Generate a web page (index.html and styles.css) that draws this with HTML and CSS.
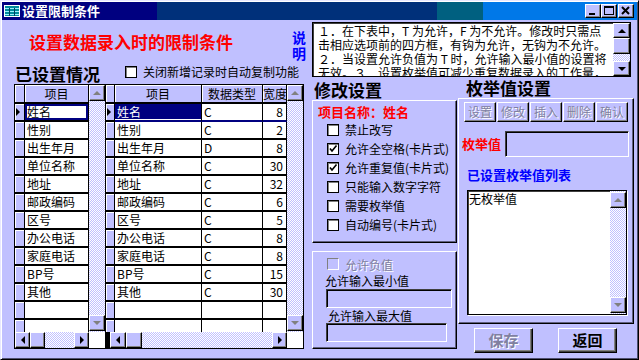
FILE: index.html
```html
<!DOCTYPE html>
<html lang="zh">
<head>
<meta charset="utf-8">
<title>设置限制条件</title>
<link rel="stylesheet" href="styles.css">
</head>
<body>
<div class="window">
  <div class="titlebar">
    <svg class="appicon" width="16" height="12" viewBox="0 0 16 12"><rect x="0.5" y="0.5" width="15" height="11" fill="#008C9C" stroke="#fff"/><path d="M1 3.5H15M1 6.5H15M1 9.5H15" stroke="#9CF0FF"/><path d="M5.5 3V11M10.5 3V11" stroke="#004060"/></svg>
    <span class="title">设置限制条件</span>
    <div class="ctrls">
      <span class="cbtn"><svg width="14" height="12" viewBox="0 0 14 12"><rect x="3" y="8" width="6" height="2" fill="#000"/></svg></span>
      <span class="cbtn"><svg width="14" height="12" viewBox="0 0 14 12"><rect x="2.5" y="1.5" width="9" height="8" fill="none" stroke="#000"/><rect x="2" y="1" width="10" height="2" fill="#000"/></svg></span>
      <span class="cbtn close"><svg width="14" height="12" viewBox="0 0 14 12"><path d="M3 2L10 9M10 2L3 9" stroke="#000" stroke-width="2"/></svg></span>
    </div>
  </div>
  <div class="body">
    <div class="leftcol">
      <div class="headrow">
        <h1 class="main-title">设置数据录入时的限制条件</h1>
        <div class="explain"><span>说</span><span>明</span></div>
      </div>
      <div class="setrow">
        <span class="section sec-left">已设置情况</span>
        <span class="cb"></span>
        <span class="cblabel">关闭新增记录时自动复制功能</span>
      </div>
      <div class="grids">
        <div class="dgrid g1">
          <div class="tbl">
            <div class="tr h"><div class="td th sel"></div><div class="td th c1a">项目</div></div>
            <div class="tr"><div class="td sel"><i class="ptr"></i></div><div class="td c1a focus">姓名</div></div>
            <div class="tr"><div class="td sel"></div><div class="td c1a">性别</div></div>
            <div class="tr"><div class="td sel"></div><div class="td c1a">出生年月</div></div>
            <div class="tr"><div class="td sel"></div><div class="td c1a">单位名称</div></div>
            <div class="tr"><div class="td sel"></div><div class="td c1a">地址</div></div>
            <div class="tr"><div class="td sel"></div><div class="td c1a">邮政编码</div></div>
            <div class="tr"><div class="td sel"></div><div class="td c1a">区号</div></div>
            <div class="tr"><div class="td sel"></div><div class="td c1a">办公电话</div></div>
            <div class="tr"><div class="td sel"></div><div class="td c1a">家庭电话</div></div>
            <div class="tr"><div class="td sel"></div><div class="td c1a">BP号</div></div>
            <div class="tr"><div class="td sel"></div><div class="td c1a">其他</div></div>
            <div class="tr"><div class="td sel"></div><div class="td c1a"></div></div>
            <div class="tr"><div class="td sel"></div><div class="td c1a"></div></div>
          </div>
          <div class="vsb">
            <span class="sbtn gv"><i class="ar up dis"></i></span>
            <span class="sbtn gv"><i class="ar down dis"></i></span>
          </div>
          <div class="hsb">
            <span class="sbtn hb"><i class="ar left"></i></span>
            <span class="sbtn hb"></span>
            <span class="track"></span>
            <span class="sbtn hb"><i class="ar right"></i></span>
          </div>
          <div class="corner"></div>
        </div>
        <div class="dgrid g2">
          <div class="tbl">
            <div class="tr h"><div class="td th sel2"></div><div class="td th c2a">项目</div><div class="td th c2b">数据类型</div><div class="td th c2c">宽度</div></div>
            <div class="tr cur"><div class="td sel2"><i class="ptr"></i></div><div class="td c2a hl">姓名</div><div class="td c2b">C</div><div class="td c2c">8</div></div>
            <div class="tr"><div class="td sel2"></div><div class="td c2a">性别</div><div class="td c2b">C</div><div class="td c2c">2</div></div>
            <div class="tr"><div class="td sel2"></div><div class="td c2a">出生年月</div><div class="td c2b">D</div><div class="td c2c">8</div></div>
            <div class="tr"><div class="td sel2"></div><div class="td c2a">单位名称</div><div class="td c2b">C</div><div class="td c2c">30</div></div>
            <div class="tr"><div class="td sel2"></div><div class="td c2a">地址</div><div class="td c2b">C</div><div class="td c2c">32</div></div>
            <div class="tr"><div class="td sel2"></div><div class="td c2a">邮政编码</div><div class="td c2b">C</div><div class="td c2c">6</div></div>
            <div class="tr"><div class="td sel2"></div><div class="td c2a">区号</div><div class="td c2b">C</div><div class="td c2c">5</div></div>
            <div class="tr"><div class="td sel2"></div><div class="td c2a">办公电话</div><div class="td c2b">C</div><div class="td c2c">8</div></div>
            <div class="tr"><div class="td sel2"></div><div class="td c2a">家庭电话</div><div class="td c2b">C</div><div class="td c2c">8</div></div>
            <div class="tr"><div class="td sel2"></div><div class="td c2a">BP号</div><div class="td c2b">C</div><div class="td c2c">15</div></div>
            <div class="tr"><div class="td sel2"></div><div class="td c2a">其他</div><div class="td c2b">C</div><div class="td c2c">30</div></div>
            <div class="tr"><div class="td sel2"></div><div class="td c2a"></div><div class="td c2b"></div><div class="td c2c"></div></div>
            <div class="tr"><div class="td sel2"></div><div class="td c2a"></div><div class="td c2b"></div><div class="td c2c"></div></div>
          </div>
          <div class="vsb">
            <span class="sbtn gv"><i class="ar up dis"></i></span>
            <span class="sbtn gv"><i class="ar down dis"></i></span>
          </div>
          <div class="hsb">
            <span class="spacer"></span>
            <span class="sbtn hb2"><i class="ar left"></i></span>
            <span class="sbtn hb2"></span>
            <span class="track"></span>
            <span class="sbtn hb"><i class="ar right"></i></span>
          </div>
          <div class="corner"></div>
        </div>
      </div>
    </div>
    <div class="rightcol">
      <div class="memo">
        <div class="memo-text">
          <div>１．在下表中，T 为允许，F 为不允许。修改时只需点</div>
          <div>击相应选项前的四方框，有钩为允许，无钩为不允许。</div>
          <div>２．当设置允许负值为 T 时，允许输入最小值的设置将</div>
          <div>无效。３．设置枚举值可减少重复数据录入的工作量，</div>
        </div>
        <div class="memo-sb">
          <span class="sbtn mb"><i class="ar up"></i></span>
          <span class="sbtn mthumb"></span>
          <span class="track"></span>
          <span class="sbtn mb"><i class="ar down"></i></span>
        </div>
      </div>
      <div class="panels">
        <div class="midcol">
          <div class="section sec-mid">修改设置</div>
          <div class="gbox box1">
            <div class="itemname">项目名称：姓名</div>
            <div class="cbrow"><span class="cb"></span><span class="cblabel">禁止改写</span></div>
            <div class="cbrow"><span class="cb"><svg width="10" height="10" viewBox="0 0 10 10"><path d="M2 4.5L4 7L8.5 1.5" fill="none" stroke="#000" stroke-width="1.6"/></svg></span><span class="cblabel">允许全空格(卡片式)</span></div>
            <div class="cbrow"><span class="cb"><svg width="10" height="10" viewBox="0 0 10 10"><path d="M2 4.5L4 7L8.5 1.5" fill="none" stroke="#000" stroke-width="1.6"/></svg></span><span class="cblabel">允许重复值(卡片式)</span></div>
            <div class="cbrow"><span class="cb"></span><span class="cblabel">只能输入数字字符</span></div>
            <div class="cbrow"><span class="cb"></span><span class="cblabel">需要枚举值</span></div>
            <div class="cbrow"><span class="cb"></span><span class="cblabel">自动编号(卡片式)</span></div>
          </div>
          <div class="gbox box2">
            <div class="cbrow negrow"><span class="cb dis"></span><span class="cblabel distext">允许负值</span></div>
            <div class="flabel l1">允许输入最小值</div>
            <div class="field f1"></div>
            <div class="flabel l2">允许输入最大值</div>
            <div class="field f2"></div>
          </div>
        </div>
        <div class="enumcol">
          <div class="section sec-enum">枚举值设置</div>
          <div class="gbox box3">
            <div class="ebtns">
              <span class="ebtn distext">设置</span>
              <span class="ebtn distext">修改</span>
              <span class="ebtn distext">插入</span>
              <span class="ebtn distext">删除</span>
              <span class="ebtn distext">确认</span>
            </div>
            <div class="enumrow">
              <span class="enumlabel">枚举值</span>
              <span class="field f3"></span>
            </div>
            <div class="listtitle">已设置枚举值列表</div>
            <div class="listbox">
              <div class="list-text">无枚举值</div>
              <div class="vsb lsb">
                <span class="sbtn gv"><i class="ar up dis"></i></span>
                <span class="sbtn gv"><i class="ar down dis"></i></span>
              </div>
            </div>
          </div>
          <div class="bottombtns">
            <span class="bbtn distext">保存</span>
            <span class="bbtn go">返回</span>
          </div>
        </div>
      </div>
    </div>
  </div>
</div>
</body>
</html>
```

FILE: styles.css
```css
* { box-sizing: border-box; margin: 0; padding: 0; }
html, body { width: 639px; height: 360px; overflow: hidden; }
body {
  background: #C0C0FF;
  font-family: "Noto Sans CJK SC", "Noto Sans", sans-serif;
  font-size: 12px;
  color: #000;
}
.window {
  width: 639px;
  height: 360px;
  background: #C0C0FF;
  border: 1px solid;
  border-color: #E8E8FF #000 #000 #E8E8FF;
  box-shadow: inset 1px 1px #fff, inset -1px -1px #505070;
  display: flex;
  flex-direction: column;
}
/* title bar */
.titlebar {
  margin: 1px 1px 0 1px;
  height: 18px;
  display: flex;
  align-items: center;
  padding-left: 2px;
  background: linear-gradient(to right, #000080 0 155px, #00307A 155px 435px, #006080 435px 481px, #0078E8 481px);
  flex: none;
}
.appicon { display: block; flex: none; }
.title {
  color: #fff;
  font-weight: bold;
  font-size: 13px;
  line-height: 16px;
  margin-left: 2px;
}
.ctrls { margin-left: auto; display: flex; margin-right: 3px; }
.cbtn {
  width: 16px;
  height: 14px;
  background: #C0C0FF;
  border: 1px solid;
  border-color: #fff #000 #000 #fff;
  box-shadow: inset -1px -1px #808080;
  display: flex;
  align-items: center;
  justify-content: center;
}
.cbtn.close { margin-left: 1px; }
.cbtn svg { display: block; }

/* body */
.body {
  flex: 1;
  display: flex;
  padding-left: 13px;
}
.leftcol { width: 292px; display: flex; flex-direction: column; flex: none; }
.headrow { height: 44px; display: flex; align-items: flex-start; }
.main-title {
  color: #FF0000;
  font-size: 17px;
  font-weight: bold;
  line-height: 20px;
  margin: 12px 0 0 15px;
  white-space: nowrap;
}
.explain {
  margin-left: auto;
  width: 14px;
  margin-top: 9px;
  color: #0000FF;
  font-size: 14px;
  font-weight: bold;
  line-height: 16px;
  display: flex;
  flex-direction: column;
}
.setrow { height: 20px; display: flex; align-items: flex-start; }
.section { font-size: 17px; font-weight: bold; line-height: 20px; white-space: nowrap; }
.sec-left { width: 111px; padding-left: 1px; }
.setrow .cb { margin-top: 2px; }
.setrow .cblabel { margin-left: 6px; line-height: 16px; }

.cb {
  width: 12px;
  height: 12px;
  flex: none;
  background: #fff;
  border: 1px solid #000;
  box-shadow: inset 1px 1px #808080;
  display: flex;
  align-items: center;
  justify-content: center;
}
.cb svg { display: block; }
.cb.dis { background: #C0C0FF; border-color: #808080 #fff #fff #808080; box-shadow: none; }
.cblabel { font-size: 12px; white-space: nowrap; }
.distext { color: #8080A0; text-shadow: 1px 1px #fff; }

/* grids */
.grids { display: flex; height: 265px; }
.dgrid {
  display: grid;
  border: 1px solid #000;
  background: #fff;
  height: 265px;
}
.g1 { width: 91px; border-right: none; grid-template-columns: 74px 16px; grid-template-rows: 247px 16px; }
.g2 { width: 199px; grid-template-columns: 181px 16px; grid-template-rows: 247px 16px; }
.tbl { overflow: hidden; background: #fff; }
.tr { display: flex; height: 18px; }
.tr.h { height: 19px; }
.td {
  flex: none;
  border-right: 1px solid #000;
  border-bottom: 2px solid #000;
  padding-left: 2px;
  line-height: 16px;
  white-space: nowrap;
  overflow: hidden;
  font-size: 12px;
}
.th { background: #C0C0FF; text-align: center; padding-left: 0; line-height: 17px; box-shadow: inset 1px 1px #fff; }
.sel, .sel2 { background: #C0C0FF; box-shadow: inset 1px 1px #fff; padding-left: 1px; display: flex; align-items: center; }
.sel { width: 10px; }
.sel2 { width: 9px; }
.c1a { width: 64px; }
.c2a { width: 87px; }
.c2b { width: 61px; }
.c2c { width: 24px; text-align: right; padding-left: 0; padding-right: 3px; }
.th.c2c { text-align: center; padding-right: 0; }
.ptr { display: block; width: 0; height: 0; border-top: 4px solid transparent; border-bottom: 4px solid transparent; border-left: 4px solid #000; }
.focus { box-shadow: inset 0 0 0 1px #000080, inset 0 0 0 2px #000080; }
.cur .td { border-bottom-color: #000080; }
.cur .sel2 { border-bottom-color: #000; }
.hl { background: #000080; color: #fff; box-shadow: inset 0 -1px #fff; }

.vsb {
  display: flex;
  flex-direction: column;
  justify-content: space-between;
  background-color: #fff;
  background-image: repeating-conic-gradient(#C0C0FF 0 25%, #fff 0 50%);
  background-size: 2px 2px;
}
.sbtn {
  background: #C0C0FF;
  border: 1px solid;
  border-color: #fff #000 #000 #fff;
  box-shadow: inset -1px -1px #808080;
  display: flex;
  align-items: center;
  justify-content: center;
  flex: none;
}
.gv { height: 16px; }
.g1 .vsb .gv:last-child, .g2 .vsb .gv:last-child { margin-bottom: 1px; }
.hsb { display: flex; background-color: #fff; background-image: repeating-conic-gradient(#C0C0FF 0 25%, #fff 0 50%); background-size: 2px 2px; }
.hb { width: 15px; }
.hb2 { width: 16px; }
.track { flex: 1; }
.spacer { width: 4px; background: #000; flex: none; }
.corner { background: #fff; }
.ar { display: block; width: 0; height: 0; }
.ar.up { border-left: 4px solid transparent; border-right: 4px solid transparent; border-bottom: 4px solid #000; }
.ar.down { border-left: 4px solid transparent; border-right: 4px solid transparent; border-top: 4px solid #000; }
.ar.left { border-top: 4px solid transparent; border-bottom: 4px solid transparent; border-right: 4px solid #000; }
.ar.right { border-top: 4px solid transparent; border-bottom: 4px solid transparent; border-left: 4px solid #000; }
.ar.up.dis { border-bottom-color: #808080; }
.ar.down.dis { border-top-color: #808080; }

/* right column */
.rightcol { width: 325px; margin-left: 6px; display: flex; flex-direction: column; flex: none; }
.memo {
  margin-top: 2px;
  width: 319px;
  height: 55px;
  border: 1px solid #000;
  box-shadow: inset 1px 1px #404040;
  background: #fff;
  display: flex;
  flex: none;
}
.memo-text {
  width: 300px;
  padding: 1px 0 0 5px;
  line-height: 14px;
  font-size: 12px;
  white-space: nowrap;
  overflow: hidden;
}
.memo-sb {
  width: 17px;
  display: flex;
  flex-direction: column;
  background-color: #fff;
  background-image: repeating-conic-gradient(#C0C0FF 0 25%, #fff 0 50%);
  background-size: 2px 2px;
}
.mb { height: 15px; }
.mthumb { height: 16px; }

.panels { display: flex; }
.midcol { width: 145px; display: flex; flex-direction: column; flex: none; }
.enumcol { width: 176px; margin-left: 1px; display: flex; flex-direction: column; flex: none; }
.sec-mid { height: 23px; padding: 3px 0 0 2px; }
.sec-enum { height: 21px; padding: 1px 0 0 8px; }
.gbox {
  border: 1px solid;
  border-color: #fff #000 #000 #fff;
  box-shadow: inset -1px -1px #606080;
}
.box1 { height: 143px; padding: 3px 0 0 5px; }
.itemname { color: #FF0000; font-weight: bold; font-size: 13px; line-height: 16px; white-space: nowrap; }
.cbrow { display: flex; align-items: center; height: 19px; }
.box1 .cbrow { padding-left: 9px; }
.cbrow .cblabel { margin-left: 6px; }
.box2 { height: 98px; margin-top: 8px; padding: 3px 0 0 12px; }
.negrow { height: 18px; padding-left: 2px; }
.flabel { font-size: 12px; line-height: 16px; white-space: nowrap; }
.l2 { margin-left: 3px; line-height: 15px; }
.field {
  display: block;
  background: #C0C0FF;
  border: 1px solid;
  border-color: #404040 #fff #fff #404040;
  box-shadow: inset 1px 1px #000;
}
.f1 { width: 126px; height: 19px; margin-left: 1px; }
.f2 { width: 121px; height: 19px; margin-left: 1px; }

.box3 { height: 226px; padding: 3px 0 0 5px; }
.ebtns { display: flex; gap: 1px; }
.ebtn {
  width: 32px;
  height: 20px;
  background: #C0C0FF;
  border: 1px solid;
  border-color: #fff #000 #000 #fff;
  box-shadow: inset -1px -1px #808080;
  text-align: center;
  line-height: 17px;
  font-size: 12px;
}
.enumrow { display: flex; margin-top: 9px; margin-left: -2px; }
.enumlabel { width: 43px; color: #FF0000; font-weight: bold; font-size: 13px; line-height: 26px; white-space: nowrap; }
.f3 { width: 124px; height: 26px; }
.listtitle { color: #0000FF; font-weight: bold; font-size: 13px; line-height: 16px; margin-top: 10px; margin-left: 3px; white-space: nowrap; }
.listbox {
  margin: 7px 0 0 3px;
  width: 160px;
  height: 125px;
  background: #fff;
  border: 1px solid #000;
  box-shadow: inset 1px 1px #404040, 1px 1px #fff;
  display: flex;
}
.list-text { flex: 1; padding: 1px 0 0 1px; line-height: 14px; font-size: 12px; }
.lsb { width: 16px; padding: 1px 0; }
.lsb .gv { height: 16px; }

.bottombtns { display: flex; margin-top: 4px; }
.bbtn {
  width: 59px;
  height: 25px;
  margin-left: 16px;
  background: #C0C0FF;
  border: 1px solid;
  border-color: #fff #000 #000 #fff;
  box-shadow: inset -1px -1px #404040, inset -2px -2px #808080;
  text-align: center;
  font-size: 15px;
  font-weight: bold;
  line-height: 22px;
}
.bbtn.go { margin-left: 25px; }
```
